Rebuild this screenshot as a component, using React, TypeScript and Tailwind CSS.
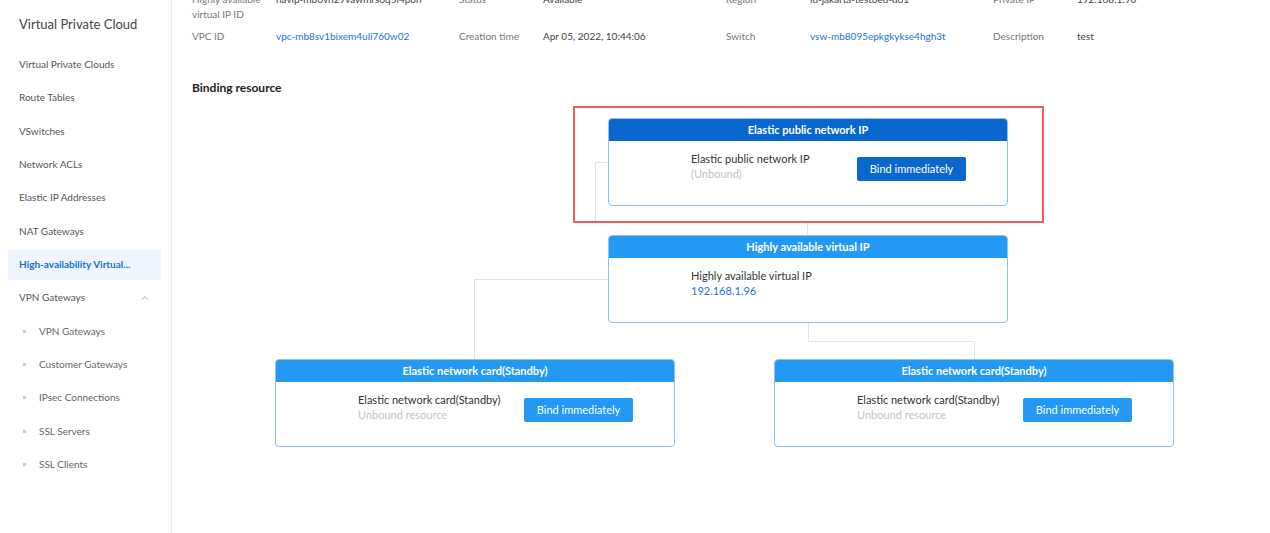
import { ChevronUp } from "lucide-react";

const navItems = [
  "Virtual Private Clouds",
  "Route Tables",
  "VSwitches",
  "Network ACLs",
  "Elastic IP Addresses",
  "NAT Gateways",
];

const vpnItems = ["VPN Gateways", "Customer Gateways", "IPsec Connections", "SSL Servers", "SSL Clients"];

type Field = { label: string[]; value: string; link?: boolean };

const rowOne: Field[] = [
  { label: ["Highly available", "virtual IP ID"], value: "havip-mb6vh29vawmrs0q5i4pbn" },
  { label: ["Status"], value: "Available" },
  { label: ["Region"], value: "id-jakarta-testbed-d01" },
  { label: ["Private IP"], value: "192.168.1.96" },
];

const rowTwo: Field[] = [
  { label: ["VPC ID"], value: "vpc-mb8sv1bixem4uli760w02", link: true },
  { label: ["Creation time"], value: "Apr 05, 2022, 10:44:06" },
  { label: ["Switch"], value: "vsw-mb8095epkgkykse4hgh3t", link: true },
  { label: ["Description"], value: "test" },
];

function Sidebar() {
  return (
    <aside className="w-[172px] shrink-0 border-r border-[#ececec] min-h-[533px]">
      <div className="pl-[19px] pt-[14px] h-[48px] text-[13px] leading-[20px] text-[#444]">Virtual Private Cloud</div>
      {navItems.map((item) => (
        <div key={item} className="h-[33.33px] flex items-center pl-[19px] text-[10px] text-[#555]">
          {item}
        </div>
      ))}
      <div className="h-[33.33px] flex items-center">
        <div className="ml-2 w-[153px] h-[30px] bg-[#eef5fe] flex items-center pl-[11px] text-[10px] font-bold text-[#1a6fd0]">
          High-availability Virtual...
        </div>
      </div>
      <div className="h-[33.33px] flex items-center justify-between pl-[19px] pr-[20px] text-[10px] text-[#555]">
        <span>VPN Gateways</span>
        <ChevronUp size={12} strokeWidth={1.5} className="text-[#888]" />
      </div>
      {vpnItems.map((item) => (
        <div key={item} className="h-[33.33px] flex items-center pl-[23px] text-[10px] text-[#666]">
          <span className="w-[3px] h-[3px] bg-[#ccc] mr-[13px]" />
          {item}
        </div>
      ))}
    </aside>
  );
}

function InfoRow({ fields }: { fields: Field[] }) {
  return (
    <div className="grid grid-cols-[267px_267px_267px_267px] text-[10px] leading-[15px]">
      {fields.map((f) => (
        <div key={f.value} className="flex">
          <div className="w-[84px] text-[#777]">
            {f.label.map((l) => (
              <div key={l}>{l}</div>
            ))}
          </div>
          <div className={f.link ? "text-[#1a73d9]" : "text-[#444]"}>{f.value}</div>
        </div>
      ))}
    </div>
  );
}

function NodeCard({
  title,
  dark,
  line1,
  line2,
  line2Blue,
  button,
  className,
}: {
  title: string;
  dark?: boolean;
  line1: string;
  line2: string;
  line2Blue?: boolean;
  button?: boolean;
  className: string;
}) {
  return (
    <div className={`absolute w-[400px] h-[88px] rounded-[4px] border border-[#8cc3f5] bg-white overflow-hidden ${className}`}>
      <div
        className={`h-[22px] flex items-center justify-center text-[11px] font-bold text-white ${
          dark ? "bg-[#0867cc]" : "bg-[#2399f3]"
        }`}
      >
        {title}
      </div>
      <div className="flex pl-[82px] pt-[10px]">
        <div className="w-[166px] text-[11px] leading-[15px]">
          <div className="text-[#333]">{line1}</div>
          <div className={line2Blue ? "text-[#1a73d9]" : "text-[#c4c4c4]"}>{line2}</div>
        </div>
        {button && (
          <div
            className={`mt-[6px] w-[109px] h-[24px] rounded-[2px] flex items-center justify-center text-[11px] text-white ${
              dark ? "bg-[#0867cc]" : "bg-[#2399f3]"
            }`}
          >
            Bind immediately
          </div>
        )}
      </div>
    </div>
  );
}

function Diagram() {
  return (
    <div className="relative h-[360px] mt-[10px]">
      <svg className="absolute inset-0 w-full h-full" fill="none" stroke="#e2e2e2" strokeWidth="1">
        <path d="M436 56.5 H423.5 V116.5 H635.5 V129" />
        <path d="M436 173.5 H302.5 V253" />
        <path d="M636.5 217 V235.5 H802.5 V253" />
      </svg>
      <div className="absolute left-[401px] top-0 w-[471px] h-[117px] border-2 border-[#f25b5b]" />
      <NodeCard
        className="left-[436px] top-[12px]"
        title="Elastic public network IP"
        dark
        line1="Elastic public network IP"
        line2="(Unbound)"
        button
      />
      <NodeCard
        className="left-[436px] top-[129px]"
        title="Highly available virtual IP"
        line1="Highly available virtual IP"
        line2="192.168.1.96"
        line2Blue
      />
      <NodeCard
        className="left-[103px] top-[253px]"
        title="Elastic network card(Standby)"
        line1="Elastic network card(Standby)"
        line2="Unbound resource"
        button
      />
      <NodeCard
        className="left-[602px] top-[253px]"
        title="Elastic network card(Standby)"
        line1="Elastic network card(Standby)"
        line2="Unbound resource"
        button
      />
    </div>
  );
}

export default function App() {
  return (
    <div
      className="flex w-[1270px] h-[533px] overflow-hidden bg-white"
      style={{ fontFamily: '"Segoe UI", Lato, "Noto Sans", sans-serif' }}
    >
      <Sidebar />
      <main className="flex-1 overflow-hidden">
        <div className="pl-[20px] -mt-[8px] flex flex-col gap-[7px]">
          <InfoRow fields={rowOne} />
          <InfoRow fields={rowTwo} />
        </div>
        <div className="pl-[20px] mt-[36px] text-[12px] leading-[16px] font-bold text-[#222]">Binding resource</div>
        <Diagram />
      </main>
    </div>
  );
}
